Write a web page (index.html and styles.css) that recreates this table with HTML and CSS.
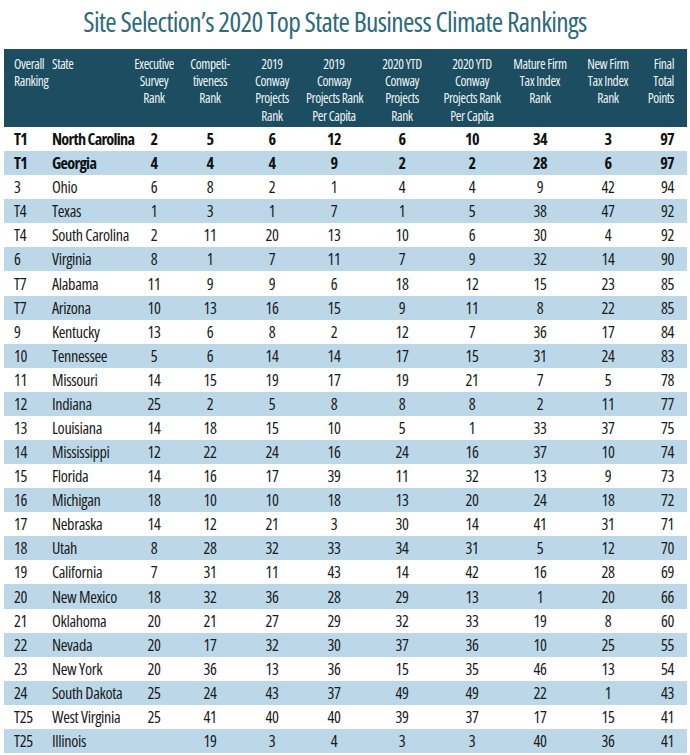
FILE: index.html
```html
<!DOCTYPE html>
<html lang="en">
<head>
<meta charset="utf-8">
<title>Site Selection’s 2020 Top State Business Climate Rankings</title>
<link rel="stylesheet" href="styles.css">
</head>
<body>
<h1 class="title">Site Selection’s 2020 Top State Business Climate Rankings</h1>
<table class="rankings">
  <colgroup>
    <col class="c-rank"><col class="c-state"><col class="c-exec"><col class="c-comp">
    <col class="c-p19"><col class="c-pc19"><col class="c-p20"><col class="c-pc20">
    <col class="c-mature"><col class="c-new"><col class="c-final">
  </colgroup>
  <thead>
    <tr>
      <th class="left">Overall<br>Ranking</th>
      <th class="left">State</th>
      <th>Executive<br>Survey<br>Rank</th>
      <th>Competi-<br>tiveness<br>Rank</th>
      <th>2019<br>Conway<br>Projects<br>Rank</th>
      <th>2019<br>Conway<br>Projects Rank<br>Per Capita</th>
      <th>2020 YTD<br>Conway<br>Projects<br>Rank</th>
      <th>2020 YTD<br>Conway<br>Projects Rank<br>Per Capita</th>
      <th>Mature Firm<br>Tax Index<br>Rank</th>
      <th>New Firm<br>Tax Index<br>Rank</th>
      <th class="right">Final<br>Total<br>Points</th>
    </tr>
  </thead>
  <tbody>
    <tr class="top"><td class="left">T1</td><td class="left">North Carolina</td><td>2</td><td>5</td><td>6</td><td>12</td><td>6</td><td>10</td><td>34</td><td>3</td><td class="right">97</td></tr>
    <tr class="top"><td class="left">T1</td><td class="left">Georgia</td><td>4</td><td>4</td><td>4</td><td>9</td><td>2</td><td>2</td><td>28</td><td>6</td><td class="right">97</td></tr>
    <tr><td class="left">3</td><td class="left">Ohio</td><td>6</td><td>8</td><td>2</td><td>1</td><td>4</td><td>4</td><td>9</td><td>42</td><td class="right">94</td></tr>
    <tr><td class="left">T4</td><td class="left">Texas</td><td>1</td><td>3</td><td>1</td><td>7</td><td>1</td><td>5</td><td>38</td><td>47</td><td class="right">92</td></tr>
    <tr><td class="left">T4</td><td class="left">South Carolina</td><td>2</td><td>11</td><td>20</td><td>13</td><td>10</td><td>6</td><td>30</td><td>4</td><td class="right">92</td></tr>
    <tr><td class="left">6</td><td class="left">Virginia</td><td>8</td><td>1</td><td>7</td><td>11</td><td>7</td><td>9</td><td>32</td><td>14</td><td class="right">90</td></tr>
    <tr><td class="left">T7</td><td class="left">Alabama</td><td>11</td><td>9</td><td>9</td><td>6</td><td>18</td><td>12</td><td>15</td><td>23</td><td class="right">85</td></tr>
    <tr><td class="left">T7</td><td class="left">Arizona</td><td>10</td><td>13</td><td>16</td><td>15</td><td>9</td><td>11</td><td>8</td><td>22</td><td class="right">85</td></tr>
    <tr><td class="left">9</td><td class="left">Kentucky</td><td>13</td><td>6</td><td>8</td><td>2</td><td>12</td><td>7</td><td>36</td><td>17</td><td class="right">84</td></tr>
    <tr><td class="left">10</td><td class="left">Tennessee</td><td>5</td><td>6</td><td>14</td><td>14</td><td>17</td><td>15</td><td>31</td><td>24</td><td class="right">83</td></tr>
    <tr><td class="left">11</td><td class="left">Missouri</td><td>14</td><td>15</td><td>19</td><td>17</td><td>19</td><td>21</td><td>7</td><td>5</td><td class="right">78</td></tr>
    <tr><td class="left">12</td><td class="left">Indiana</td><td>25</td><td>2</td><td>5</td><td>8</td><td>8</td><td>8</td><td>2</td><td>11</td><td class="right">77</td></tr>
    <tr><td class="left">13</td><td class="left">Louisiana</td><td>14</td><td>18</td><td>15</td><td>10</td><td>5</td><td>1</td><td>33</td><td>37</td><td class="right">75</td></tr>
    <tr><td class="left">14</td><td class="left">Mississippi</td><td>12</td><td>22</td><td>24</td><td>16</td><td>24</td><td>16</td><td>37</td><td>10</td><td class="right">74</td></tr>
    <tr><td class="left">15</td><td class="left">Florida</td><td>14</td><td>16</td><td>17</td><td>39</td><td>11</td><td>32</td><td>13</td><td>9</td><td class="right">73</td></tr>
    <tr><td class="left">16</td><td class="left">Michigan</td><td>18</td><td>10</td><td>10</td><td>18</td><td>13</td><td>20</td><td>24</td><td>18</td><td class="right">72</td></tr>
    <tr><td class="left">17</td><td class="left">Nebraska</td><td>14</td><td>12</td><td>21</td><td>3</td><td>30</td><td>14</td><td>41</td><td>31</td><td class="right">71</td></tr>
    <tr><td class="left">18</td><td class="left">Utah</td><td>8</td><td>28</td><td>32</td><td>33</td><td>34</td><td>31</td><td>5</td><td>12</td><td class="right">70</td></tr>
    <tr><td class="left">19</td><td class="left">California</td><td>7</td><td>31</td><td>11</td><td>43</td><td>14</td><td>42</td><td>16</td><td>28</td><td class="right">69</td></tr>
    <tr><td class="left">20</td><td class="left">New Mexico</td><td>18</td><td>32</td><td>36</td><td>28</td><td>29</td><td>13</td><td>1</td><td>20</td><td class="right">66</td></tr>
    <tr><td class="left">21</td><td class="left">Oklahoma</td><td>20</td><td>21</td><td>27</td><td>29</td><td>32</td><td>33</td><td>19</td><td>8</td><td class="right">60</td></tr>
    <tr><td class="left">22</td><td class="left">Nevada</td><td>20</td><td>17</td><td>32</td><td>30</td><td>37</td><td>36</td><td>10</td><td>25</td><td class="right">55</td></tr>
    <tr><td class="left">23</td><td class="left">New York</td><td>20</td><td>36</td><td>13</td><td>36</td><td>15</td><td>35</td><td>46</td><td>13</td><td class="right">54</td></tr>
    <tr><td class="left">24</td><td class="left">South Dakota</td><td>25</td><td>24</td><td>43</td><td>37</td><td>49</td><td>49</td><td>22</td><td>1</td><td class="right">43</td></tr>
    <tr><td class="left">T25</td><td class="left">West Virginia</td><td>25</td><td>41</td><td>40</td><td>40</td><td>39</td><td>37</td><td>17</td><td>15</td><td class="right">41</td></tr>
    <tr><td class="left">T25</td><td class="left">Illinois</td><td></td><td>19</td><td>3</td><td>4</td><td>3</td><td>3</td><td>40</td><td>36</td><td class="right">41</td></tr>
  </tbody>
</table>
</body>
</html>
```
FILE: styles.css
```css
html, body {
  margin: 0;
  padding: 0;
  background: #ffffff;
}

body {
  width: 690px;
  font-family: "Open Sans", "Roboto", "DejaVu Sans", sans-serif;
  font-stretch: 75%;
  color: #1a1a1a;
}

.title {
  margin: 0;
  height: 49px;
  padding-right: 20px;
  line-height: 44px;
  font-size: 27.5px;
  font-weight: 450;
  letter-spacing: -0.65px;
  text-align: center;
  color: #2c6a7c;
  white-space: nowrap;
}

.rankings {
  margin-left: 4px;
  width: 683px;
  table-layout: fixed;
  border-collapse: collapse;
  border-spacing: 0;
}

.c-rank { width: 44px; }
.c-state { width: 78px; }
.c-exec { width: 56px; }
.c-comp { width: 56px; }
.c-p19 { width: 68px; }
.c-pc19 { width: 56px; }
.c-p20 { width: 80px; }
.c-pc20 { width: 60px; }
.c-mature { width: 76px; }
.c-new { width: 60px; }
.c-final { width: 49px; }

.rankings thead tr {
  height: 78px;
  background: #1c4d60;
}

.rankings th {
  padding: 7px 0 0 0;
  vertical-align: top;
  text-align: center;
  font-size: 13.5px;
  line-height: 17.2px;
  font-weight: 500;
  letter-spacing: -0.4px;
  color: #eef4f6;
  white-space: nowrap;
}

.rankings tbody tr {
  height: 24.08px;
}

.rankings tbody tr:nth-child(even) {
  background: #bcd7e8;
}

.rankings td {
  padding: 0;
  text-align: center;
  vertical-align: middle;
  font-size: 16.2px;
  line-height: 20px;
  font-weight: 500;
  letter-spacing: -0.35px;
  white-space: nowrap;
  overflow: visible;
}

.rankings .left {
  text-align: left;
  padding-left: 10px;
}

.rankings td.left + td.left,
.rankings th.left + th.left {
  padding-left: 4px;
}

.rankings .right {
  text-align: right;
  padding-right: 13px;
}

.rankings tr.top td {
  font-weight: 700;
  font-size: 16.2px;
  letter-spacing: -0.7px;
  color: #111111;
}
```
